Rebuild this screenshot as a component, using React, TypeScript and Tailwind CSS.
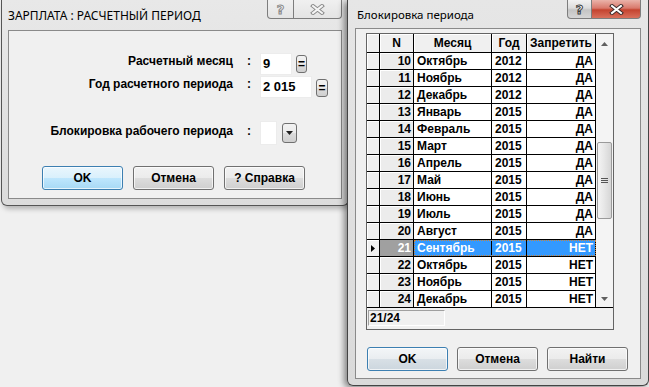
import type { ReactNode } from "react";

type Row = { n: number; month: string; year: number; lock: string };

const rows: Row[] = [
  { n: 10, month: "Октябрь", year: 2012, lock: "ДА" },
  { n: 11, month: "Ноябрь", year: 2012, lock: "ДА" },
  { n: 12, month: "Декабрь", year: 2012, lock: "ДА" },
  { n: 13, month: "Январь", year: 2015, lock: "ДА" },
  { n: 14, month: "Февраль", year: 2015, lock: "ДА" },
  { n: 15, month: "Март", year: 2015, lock: "ДА" },
  { n: 16, month: "Апрель", year: 2015, lock: "ДА" },
  { n: 17, month: "Май", year: 2015, lock: "ДА" },
  { n: 18, month: "Июнь", year: 2015, lock: "ДА" },
  { n: 19, month: "Июль", year: 2015, lock: "ДА" },
  { n: 20, month: "Август", year: 2015, lock: "ДА" },
  { n: 21, month: "Сентябрь", year: 2015, lock: "НЕТ" },
  { n: 22, month: "Октябрь", year: 2015, lock: "НЕТ" },
  { n: 23, month: "Ноябрь", year: 2015, lock: "НЕТ" },
  { n: 24, month: "Декабрь", year: 2015, lock: "НЕТ" },
];

const SELECTED = 21;

function CaptionButtons({ active }: { active: boolean }) {
  return (
    <div className="flex h-[19px] self-start">
      <div
        className={`flex h-[19px] items-center justify-center rounded-bl-[4px] border border-t-0 border-[#7d7d7d] ${
          active
            ? "w-[25px] bg-[linear-gradient(#f2f2f2,#dcdcdc_45%,#c4c4c4_55%,#d6d6d6)]"
            : "w-[27px] bg-[linear-gradient(#f0f0f0,#e4e4e4)]"
        }`}
      >
        <span
          className={`font-['DejaVu_Sans',sans-serif] text-[13px] leading-none font-bold ${
            active ? "text-white [-webkit-text-stroke:1px_#3c3c3c]" : "text-[#f4f4f4] [-webkit-text-stroke:1px_#8a8a8a]"
          }`}
        >
          ?
        </span>
      </div>
      <div
        className={`flex h-[19px] items-center justify-center rounded-br-[4px] border border-t-0 border-l-0 border-[#7d7d7d] ${
          active
            ? "w-[49px] bg-[linear-gradient(#eab3aa,#d9796c_45%,#c4432f_55%,#d9705c)]"
            : "w-[48px] bg-[linear-gradient(#f0f0f0,#e4e4e4)]"
        }`}
      >
        <svg width="15" height="11" viewBox="0 0 15 11">
          <path d="M3 2 L12 9 M12 2 L3 9" stroke={active ? "#3a2a2a" : "#8a8a8a"} strokeWidth="4" strokeLinecap="square" />
          <path d="M3 2 L12 9 M12 2 L3 9" stroke={active ? "#ffffff" : "#f4f4f4"} strokeWidth="2" strokeLinecap="square" />
        </svg>
      </div>
    </div>
  );
}

function WinButton({ children, kind }: { children: ReactNode; kind?: "focus" | "default" }) {
  const skin =
    kind === "focus"
      ? "border-[#3c7fb1] bg-[linear-gradient(#eaf6fd,#d9f0fc_50%,#bee6fd_51%,#a7d9f5)]"
      : kind === "default"
        ? "border-[#3c7fb1] bg-[linear-gradient(#f3f6f8,#e9edf0_50%,#d8e0e6_51%,#ccd6de)]"
        : "border-[#707070] bg-[linear-gradient(#f2f2f2,#ebebeb_50%,#dddddd_51%,#cfcfcf)]";
  return (
    <div
      className={`flex h-[24px] w-[81px] items-center justify-center rounded-[3px] border text-[12px] font-bold text-black shadow-[inset_0_0_0_1px_rgba(255,255,255,0.7)] ${skin}`}
    >
      {children}
    </div>
  );
}

function SmallButton({ children, w, h }: { children: ReactNode; w: string; h: string }) {
  return (
    <div
      className={`flex items-center justify-center rounded-[3px] border border-[#707070] bg-[linear-gradient(#f2f2f2,#ebebeb_50%,#dddddd_51%,#cfcfcf)] ${w} ${h}`}
    >
      {children}
    </div>
  );
}

function LeftWindow() {
  return (
    <div className="ml-[1px] flex h-[206px] w-[348px] shrink-0 flex-col rounded-b-[6px] border border-t-0 border-[#555] bg-[linear-gradient(#e8e8e8,#dcdcdc)] px-[6px] pb-[6px] shadow-[2px_3px_5px_rgba(0,0,0,0.25)]">
      <div className="flex h-[30px] items-start justify-between">
        <span className="mt-[8px] font-['Noto_Sans',sans-serif] text-[12px] leading-[16px] text-black">
          ЗАРПЛАТА : РАСЧЕТНЫЙ ПЕРИОД
        </span>
        <CaptionButtons active={false} />
      </div>
      <div className="flex h-[169px] flex-col border border-[#8a8a8a] bg-[#f0f0f0] pt-[22px] text-[12px] font-bold">
        <div className="flex h-[22px] items-start">
          <span className="w-[224px] text-right leading-[16px]">Расчетный месяц</span>
          <span className="w-[27px] pl-[14px] leading-[16px]">:</span>
          <div className="h-[22px] w-[32px] border border-[#ececec] bg-white pl-[2px] text-[13px] leading-[20px]">9</div>
          <div className="ml-[4px] mt-[2px]">
            <SmallButton w="w-[11px]" h="h-[18px]">
              <span className="text-[12px] leading-none">=</span>
            </SmallButton>
          </div>
        </div>
        <div className="mt-[1px] flex h-[22px] items-start">
          <span className="w-[224px] text-right leading-[16px]">Год расчетного периода</span>
          <span className="w-[27px] pl-[14px] leading-[16px]">:</span>
          <div className="h-[22px] w-[52px] border border-[#ececec] bg-white pl-[2px] text-[13px] leading-[20px]">2 015</div>
          <div className="ml-[4px] mt-[3px]">
            <SmallButton w="w-[12px]" h="h-[18px]">
              <span className="text-[12px] leading-none">=</span>
            </SmallButton>
          </div>
        </div>
        <div className="mt-[23px] flex h-[24px] items-start">
          <span className="w-[224px] pt-[2px] text-right leading-[16px]">Блокировка рабочего периода</span>
          <span className="w-[27px] pl-[14px] pt-[2px] leading-[16px]">:</span>
          <div className="h-[24px] w-[17px] border border-[#ececec] bg-white" />
          <div className="ml-[5px] mt-[2px]">
            <SmallButton w="w-[15px]" h="h-[20px]">
              <svg width="7" height="4" viewBox="0 0 7 4">
                <path d="M0 0 H7 L3.5 4 Z" fill="#202020" />
              </svg>
            </SmallButton>
          </div>
        </div>
        <div className="ml-[33px] mt-[21px] flex gap-[10px]">
          <WinButton kind="focus">OK</WinButton>
          <WinButton>Отмена</WinButton>
          <WinButton>? Справка</WinButton>
        </div>
      </div>
    </div>
  );
}

function Scrollbar() {
  return (
    <div className="flex h-[274px] w-[17px] flex-col border-b border-black bg-[#f4f4f4]">
      <div className="flex h-[17px] items-center justify-center pt-[2px]">
        <svg width="7" height="4" viewBox="0 0 7 4">
          <path d="M3.5 0 L7 4 H0 Z" fill="#606060" />
        </svg>
      </div>
      <div className="h-[91px]" />
      <div className="mx-[1px] flex h-[77px] items-center justify-center rounded-[2px] border border-[#9a9a9a] bg-[linear-gradient(90deg,#f4f4f4,#e6e6e6_50%,#d6d6d6)]">
        <svg width="7" height="7" viewBox="0 0 7 7">
          <path d="M0 1.5 H7 M0 3.5 H7 M0 5.5 H7" stroke="#555" strokeWidth="1" />
        </svg>
      </div>
      <div className="flex-1" />
      <div className="flex h-[17px] items-center justify-center">
        <svg width="7" height="4" viewBox="0 0 7 4">
          <path d="M0 0 H7 L3.5 4 Z" fill="#606060" />
        </svg>
      </div>
    </div>
  );
}

function Grid() {
  const head = "h-[19px] border-r border-b border-black bg-[#f0f0f0] shadow-[inset_1px_1px_0_#fff] text-center leading-[18px]";
  return (
    <div className="ml-[10px] mt-[4px] flex w-[248px] flex-col border border-[#646464] bg-[#f0f0f0] text-[12px] font-bold">
      <div className="flex">
        <div className="flex w-[229px] flex-col">
          <div className="flex">
            <div className={`w-[13px] ${head}`} />
            <div className={`w-[34px] ${head}`}>N</div>
            <div className={`w-[78px] ${head}`}>Месяц</div>
            <div className={`w-[35px] ${head}`}>Год</div>
            <div className={`w-[69px] ${head}`}>Запретить</div>
          </div>
          {rows.map((r) => {
            const sel = r.n === SELECTED;
            return (
              <div key={r.n} className="flex h-[17px] border-b border-black">
                <div className="flex w-[13px] items-center justify-center border-r border-black bg-[#f0f0f0] shadow-[inset_1px_1px_0_#fff]">
                  {sel && (
                    <svg width="4" height="7" viewBox="0 0 4 7">
                      <path d="M0 0 L4 3.5 L0 7 Z" fill="#000" />
                    </svg>
                  )}
                </div>
                <div
                  className={`w-[34px] border-r border-black pr-[2px] text-right leading-[16px] ${
                    sel ? "bg-[#a0a0a0] text-white" : "bg-[#ececec] shadow-[inset_1px_1px_0_#fff]"
                  }`}
                >
                  {r.n}
                </div>
                <div
                  className={`flex w-[182px] ${
                    sel ? "bg-[#3399ff] text-white outline-1 -outline-offset-1 outline-dotted outline-[#c8843c]" : "bg-white text-black"
                  }`}
                >
                  <div className="w-[78px] border-r border-black pl-[3px] leading-[16px]">{r.month}</div>
                  <div className="w-[35px] border-r border-black pl-[3px] leading-[16px]">{r.year}</div>
                  <div className="w-[69px] border-r border-black pr-[2px] text-right leading-[16px]">{r.lock}</div>
                </div>
              </div>
            );
          })}
        </div>
        <Scrollbar />
      </div>
      <div className="flex h-[21px] items-start pl-[1px] pt-[2px]">
        <div className="h-[16px] w-[77px] border border-t-[#a0a0a0] border-l-[#a0a0a0] border-r-white border-b-white pl-[1px] leading-[14px]">
          21/24
        </div>
      </div>
    </div>
  );
}

function RightWindow() {
  return (
    <div className="relative z-10 -ml-[2px] flex h-[386px] w-[302px] shrink-0 flex-col rounded-b-[6px] border border-t-0 border-[#444] bg-[linear-gradient(#e6e6e6,#dadada)] px-[7px] pb-[6px] shadow-[-3px_2px_6px_rgba(0,0,0,0.45)]">
      <div className="flex h-[28px] items-start justify-between">
        <span className="ml-[2px] mt-[7px] font-['Noto_Sans',sans-serif] text-[11.5px] leading-[16px] text-black">
          Блокировка периода
        </span>
        <CaptionButtons active />
      </div>
      <div className="flex h-[351px] flex-col border border-[#8a8a8a] bg-[#f0f0f0]">
        <Grid />
        <div className="ml-[11px] mt-[17px] flex gap-[9px]">
          <WinButton kind="default">OK</WinButton>
          <WinButton>Отмена</WinButton>
          <WinButton>Найти</WinButton>
        </div>
      </div>
    </div>
  );
}

export default function App() {
  return (
    <div className="flex h-[387px] w-[649px] overflow-hidden bg-[#f0f0f0] font-['Liberation_Sans',Arial,sans-serif] text-black">
      <LeftWindow />
      <RightWindow />
    </div>
  );
}
